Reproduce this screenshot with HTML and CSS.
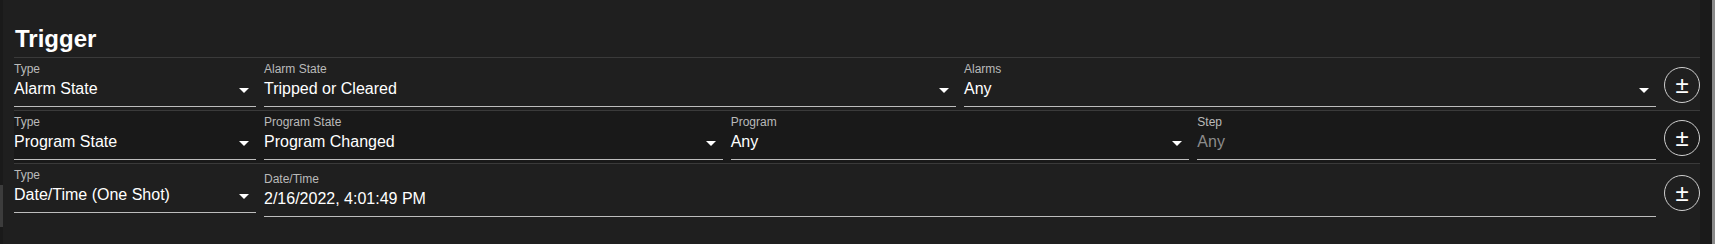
FILE: index.html
```html
<!DOCTYPE html>
<html>
<head>
<meta charset="utf-8">
<link rel="stylesheet" href="styles.css">
</head>
<body>
<div class="frame">
  <div class="leftbar"><div class="leftthumb"></div></div>
  <main class="main">
    <h2 class="title">Trigger</h2>
    <div class="row">
      <div class="field type">
        <div class="label">Type</div>
        <div class="control"><span class="value">Alarm State</span><svg class="arrow" viewBox="0 0 10 5"><polygon points="0,0 10,0 5,5"/></svg></div>
      </div>
      <div class="field grow">
        <div class="label">Alarm State</div>
        <div class="control"><span class="value">Tripped or Cleared</span><svg class="arrow" viewBox="0 0 10 5"><polygon points="0,0 10,0 5,5"/></svg></div>
      </div>
      <div class="field grow">
        <div class="label">Alarms</div>
        <div class="control"><span class="value">Any</span><svg class="arrow" viewBox="0 0 10 5"><polygon points="0,0 10,0 5,5"/></svg></div>
      </div>
      <button class="pm">±</button>
    </div>
    <div class="row alt">
      <div class="field type">
        <div class="label">Type</div>
        <div class="control"><span class="value">Program State</span><svg class="arrow" viewBox="0 0 10 5"><polygon points="0,0 10,0 5,5"/></svg></div>
      </div>
      <div class="field grow">
        <div class="label">Program State</div>
        <div class="control"><span class="value">Program Changed</span><svg class="arrow" viewBox="0 0 10 5"><polygon points="0,0 10,0 5,5"/></svg></div>
      </div>
      <div class="field grow">
        <div class="label">Program</div>
        <div class="control"><span class="value">Any</span><svg class="arrow" viewBox="0 0 10 5"><polygon points="0,0 10,0 5,5"/></svg></div>
      </div>
      <div class="field grow">
        <div class="label">Step</div>
        <div class="control"><span class="value disabled">Any</span></div>
      </div>
      <button class="pm">±</button>
    </div>
    <div class="row">
      <div class="field type">
        <div class="label">Type</div>
        <div class="control"><span class="value">Date/Time (One Shot)</span><svg class="arrow" viewBox="0 0 10 5"><polygon points="0,0 10,0 5,5"/></svg></div>
      </div>
      <div class="field grow date">
        <div class="label">Date/Time</div>
        <div class="control"><span class="value">2/16/2022, 4:01:49 PM</span></div>
      </div>
      <button class="pm">±</button>
    </div>
  </main>
  <div class="track"></div>
  <div class="thumb"></div>
</div>
</body>
</html>
```

FILE: styles.css
```css
html, body {
  margin: 0;
  padding: 0;
  background: #1f1f1f;
  font-family: "Liberation Sans", Arial, sans-serif;
  color: #ffffff;
}

.frame {
  display: flex;
  height: 244px;
  overflow: hidden;
}

.leftbar {
  width: 3px;
  background: #1a1a1a;
  display: flex;
  flex-direction: column;
  padding-top: 185px;
}

.leftthumb {
  height: 42px;
  background: #3c3c3c;
}

.main {
  flex: 1;
  padding: 25px 0 0 11px;
  min-width: 0;
}

.title {
  margin: 0 0 4px 1px;
  font-size: 24px;
  line-height: 28px;
  font-weight: bold;
}

.row {
  display: flex;
  align-items: flex-start;
  gap: 8px;
  border-top: 1px solid #3a3a3a;
  padding: 4px 0 3px;
}

.row.alt {
  background: #191919;
}

.field {
  display: flex;
  flex-direction: column;
  border-bottom: 1px solid #bdbdbd;
  padding-bottom: 8px;
  min-width: 0;
}

.field.type {
  width: 242px;
  flex: none;
}

.field.grow {
  flex: 1;
}

.field.date {
  margin-top: 4px;
}

.label {
  font-size: 12px;
  line-height: 14px;
  height: 14px;
  color: #bababa;
  white-space: nowrap;
}

.control {
  margin-top: 3px;
  display: flex;
  align-items: center;
  height: 19px;
}

.value {
  flex: 1;
  font-size: 16px;
  line-height: 19px;
  white-space: nowrap;
  color: #ffffff;
}

.value.disabled {
  color: #8c8c8c;
}

.arrow {
  width: 10px;
  height: 5px;
  margin: 3px 7px 0 0;
  fill: #ffffff;
  flex: none;
}

.pm {
  align-self: center;
  width: 36px;
  height: 36px;
  flex: none;
  border-radius: 50%;
  border: 1px solid #cfcfcf;
  background: transparent;
  color: #ffffff;
  font-family: "Liberation Sans", Arial, sans-serif;
  font-size: 24px;
  line-height: 1;
  padding: 0;
  display: grid;
  place-items: center;
}

.track {
  width: 12px;
  background: #1a1a1a;
}

.thumb {
  width: 3px;
  background: #8a8a8a;
}
```
